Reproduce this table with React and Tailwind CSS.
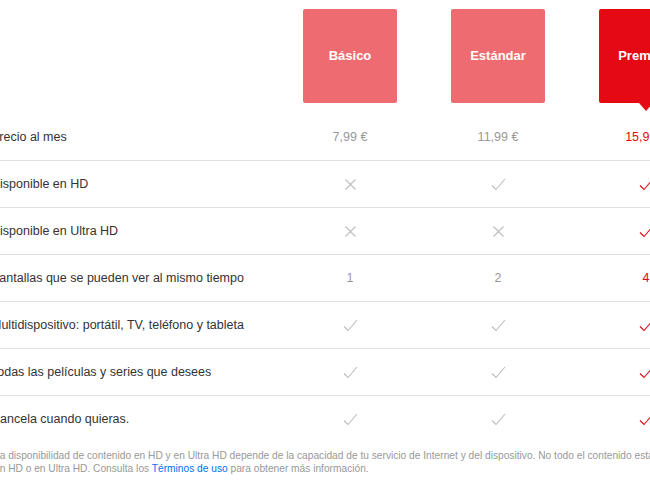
import React from "react";

const Check = ({ red }) => (
  <svg width="15" height="13" viewBox="0 0 15 13" fill="none">
    <path d="M1 7.5 L5 11.5 L14 1" stroke={red ? "#e50914" : "#bdbdbd"} strokeWidth="1.1" />
  </svg>
);

const Cross = () => (
  <svg width="11" height="11" viewBox="0 0 11 11" fill="none">
    <path d="M0.5 0.5 L10.5 10.5 M10.5 0.5 L0.5 10.5" stroke="#bdbdbd" strokeWidth="1.1" />
  </svg>
);

const rows = [
  { label: "Precio al mes", vals: ["7,99 €", "11,99 €", "15,99 €"] },
  { label: "Disponible en HD", vals: ["x", "v", "v"] },
  { label: "Disponible en Ultra HD", vals: ["x", "x", "v"] },
  { label: "Pantallas que se pueden ver al mismo tiempo", vals: ["1", "2", "4"] },
  { label: "Multidispositivo: portátil, TV, teléfono y tableta", vals: ["v", "v", "v"] },
  { label: "Todas las películas y series que desees", vals: ["v", "v", "v"] },
  { label: "Cancela cuando quieras.", vals: ["v", "v", "v"] },
];

function Cell({ v, red }) {
  if (v === "v") return <Check red={red} />;
  if (v === "x") return <Cross />;
  return <span className={red ? "text-[#e50914]" : "text-[#999999]"}>{v}</span>;
}

export default function App() {
  return (
    <div className="w-[650px] h-[487px] overflow-hidden bg-white" style={{ fontFamily: '"Liberation Sans", Arial, sans-serif' }}>
      <div className="ml-[-9px] w-[760px]">
        <div className="flex h-[114px] pt-[9px]">
          <div className="w-[285px]" />
          {["Básico", "Estándar", "Premium"].map((p, i) => (
            <div key={p} className="w-[148px] flex justify-center">
              <div
                className={`relative w-[94px] h-[94px] rounded-[2px] flex items-center justify-center text-white font-bold text-[13px] ${
                  i === 2 ? "bg-[#e50914]" : "bg-[#ef6b72]"
                }`}
              >
                {p}
                {i === 2 && (
                  <div className="absolute left-1/2 -translate-x-1/2 top-full w-0 h-0 border-l-[7px] border-r-[7px] border-t-[8px] border-l-transparent border-r-transparent border-t-[#e50914]" />
                )}
              </div>
            </div>
          ))}
        </div>
        {rows.map((r, idx) => (
          <div
            key={r.label}
            className={`flex items-center h-[47px] text-[12.5px] ${idx < rows.length - 1 ? "border-b border-[#e0e0e0]" : ""}`}
          >
            <div className="w-[285px] text-[#333333]">{r.label}</div>
            {r.vals.map((v, i) => (
              <div key={i} className="w-[148px] flex justify-center items-center">
                <Cell v={v} red={i === 2} />
              </div>
            ))}
          </div>
        ))}
        <div className="ml-[3px] w-[722px] mt-[6px] text-[10.2px] leading-[13px] text-[#999999]">
          La disponibilidad de contenido en HD y en Ultra HD depende de la capacidad de tu servicio de Internet y del dispositivo. No todo el contenido está disponible en HD o en Ultra HD. Consulta los{" "}
          <span className="text-[#0071eb]">Términos de uso</span> para obtener más información.
        </div>
      </div>
    </div>
  );
}
